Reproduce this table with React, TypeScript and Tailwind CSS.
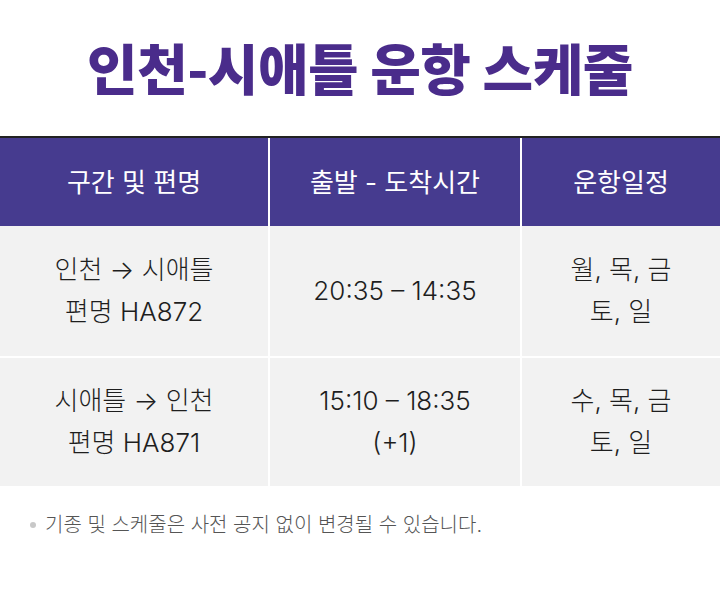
import React from "react";

const font = "font-['Inter','Noto_Sans_CJK_KR',sans-serif]";

function Row({ c1, c2, c3, h }: { c1: string[]; c2: string[]; c3: string[]; h: string }) {
  const cell = `flex flex-col items-center justify-center bg-[#f2f2f2] text-[26px] font-light leading-[42px] text-[#1e1e1e] ${h}`;
  return (
    <div className="flex gap-[2px] bg-white">
      <div className={`${cell} w-[268px]`}>
        {c1.map((t) => (
          <div key={t}>{t}</div>
        ))}
      </div>
      <div className={`${cell} w-[250px]`}>
        {c2.map((t) => (
          <div key={t}>{t}</div>
        ))}
      </div>
      <div className={`${cell} flex-1`}>
        {c3.map((t) => (
          <div key={t}>{t}</div>
        ))}
      </div>
    </div>
  );
}

export default function App() {
  const head = "flex items-center justify-center bg-[#463b8f] text-white text-[26px] font-normal h-[88px]";
  return (
    <div className={`w-[720px] h-[611px] bg-white ${font}`}>
      <div className="h-[136px] flex items-center justify-center">
        <h1 className="font-['Noto_Sans_CJK_KR',sans-serif] font-black text-[55px] leading-none tracking-[-0.5px] text-[#4a2c8b] pb-[4px]">
          인천-시애틀 운항 스케줄
        </h1>
      </div>
      <div className="border-t-2 border-[#222]">
        <div className="flex gap-[2px] bg-white">
          <div className={`${head} w-[268px]`}>구간 및 편명</div>
          <div className={`${head} w-[250px]`}>출발 - 도착시간</div>
          <div className={`${head} flex-1`}>운항일정</div>
        </div>
        <Row h="h-[130px]" c1={["인천 → 시애틀", "편명 HA872"]} c2={["20:35 – 14:35"]} c3={["월, 목, 금", "토, 일"]} />
        <div className="h-[2px] bg-white" />
        <Row h="h-[128px]" c1={["시애틀 → 인천", "편명 HA871"]} c2={["15:10 – 18:35", "(+1)"]} c3={["수, 목, 금", "토, 일"]} />
      </div>
      <div className="flex items-center gap-[9px] pl-[30px] pt-[24px] text-[20px] font-light text-[#555]">
        <span className="w-[6px] h-[6px] rounded-full bg-[#c8c8c8]" />
        <span>기종 및 스케줄은 사전 공지 없이 변경될 수 있습니다.</span>
      </div>
    </div>
  );
}
